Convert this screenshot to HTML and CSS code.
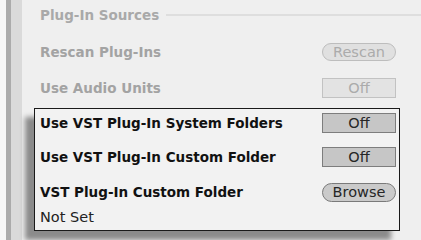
FILE: index.html
```html
<!DOCTYPE html>
<html lang="en">
<head>
    <meta charset="UTF-8">
    <meta name="viewport" content="width=device-width, initial-scale=1.0">
    <title>Plug-In Sources</title>
    <link rel="stylesheet" href="styles.css">
</head>
<body>
    <div class="prefs">
        <!-- left window edge -->
        <div class="edge">
            <div class="edge-light"></div>
            <div class="edge-dark"></div>
            <div class="edge-mid"></div>
        </div>
        <div class="panel">
            <div class="section-title">
                <span>Plug-In Sources</span>
                <div class="rule"></div>
            </div>
            <div class="row disabled">
                <span class="label">Rescan Plug-Ins</span>
                <span class="btn pill">Rescan</span>
            </div>
            <div class="row disabled">
                <span class="label">Use Audio Units</span>
                <span class="btn toggle">Off</span>
            </div>
            <!-- highlighted VST settings -->
            <div class="highlight">
                <div class="row">
                    <span class="label">Use VST Plug-In System Folders</span>
                    <span class="btn toggle">Off</span>
                </div>
                <div class="row">
                    <span class="label">Use VST Plug-In Custom Folder</span>
                    <span class="btn toggle">Off</span>
                </div>
                <div class="row">
                    <span class="label">VST Plug-In Custom Folder</span>
                    <span class="btn pill">Browse</span>
                </div>
                <div class="note">Not Set</div>
            </div>
        </div>
    </div>
</body>
</html>
```

FILE: styles.css
```css
*{
    margin: 0;
    padding: 0;
    box-sizing: border-box;
}
body{
    width: 421px;
    height: 240px;
    overflow: hidden;
    background-color: #efefef;
    font-family: "DejaVu Sans", "Liberation Sans", sans-serif;
}
.prefs{
    display: flex;
    height: 240px;
}
.edge{
    display: flex;
    flex: none;
}
.edge-light{
    width: 6px;
    background-color: #f6f6f6;
}
.edge-dark{
    width: 5px;
    background-color: #ababab;
}
.edge-mid{
    width: 11px;
    background-color: #dadada;
}
.panel{
    flex: 1;
    padding: 8px 21px 0 12px;
    display: flex;
    flex-direction: column;
}
.section-title{
    display: flex;
    align-items: center;
    gap: 7px;
    height: 14px;
    margin-right: -21px;
    padding-left: 6px;
    font-size: 13.5px;
    font-weight: bold;
    color: #a9a9a9;
}
.rule{
    flex: 1;
    height: 2px;
    background-color: #dedede;
}
.row{
    display: flex;
    align-items: center;
    justify-content: space-between;
    height: 20px;
    padding: 0 4px 0 6px;
    font-size: 13.5px;
    font-weight: bold;
    color: #111;
}
.section-title + .row{
    margin-top: 20px;
}
.row + .row{
    margin-top: 16px;
}
.row.disabled{
    color: #a3a3a3;
}
.btn{
    display: flex;
    align-items: center;
    justify-content: center;
    width: 74px;
    font-size: 14.5px;
    font-weight: normal;
    color: #262626;
}
.toggle{
    height: 20px;
    background-color: #c6c6c6;
    border: 1px solid #7d7d7d;
}
.pill{
    height: 19px;
    border-radius: 10px;
    background-color: #cacaca;
    border: 1px solid #7a7a7a;
}
.disabled .btn{
    color: #ababab;
}
.disabled .toggle{
    background-color: #e3e3e3;
    border-color: #c2c2c2;
}
.disabled .pill{
    height: 18px;
    background-color: #e0e0e0;
    border-color: #bdbdbd;
}
.highlight{
    margin-top: 10px;
    padding: 4px 3px 6px 5px;
    background-color: #f2f2f2;
    border: 1px solid #1a1a1a;
    box-shadow: -9px 9px 5px rgba(0, 0, 0, 0.42);
}
.highlight .row{
    padding: 0;
}
.highlight .row + .row{
    margin-top: 14px;
}
.highlight .row:nth-child(3){
    margin-top: 15px;
}
.note{
    margin-top: 8px;
    height: 14px;
    line-height: 14px;
    font-size: 14.5px;
    color: #222;
}
```
